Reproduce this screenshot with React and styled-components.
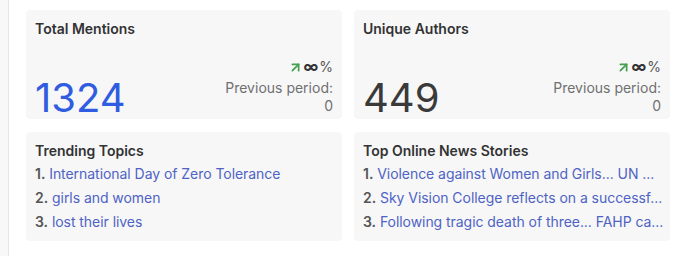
import React from 'react';
import styled, { createGlobalStyle } from 'styled-components';
import { ArrowUpRight } from 'lucide-react';

const GlobalStyle = createGlobalStyle`
  html, body {
    margin: 0;
    padding: 0;
    background: #ffffff;
    font-family: Inter, "Noto Sans", sans-serif;
  }
`;

const stats = [
  { title: 'Total Mentions', value: '1324', highlight: true, previous: '0' },
  { title: 'Unique Authors', value: '449', highlight: false, previous: '0' },
];

const lists = [
  {
    title: 'Trending Topics',
    items: ['International Day of Zero Tolerance', 'girls and women', 'lost their lives'],
  },
  {
    title: 'Top Online News Stories',
    items: [
      'Violence against Women and Girls... UN ...',
      'Sky Vision College reflects on a successf...',
      'Following tragic death of three... FAHP ca...',
    ],
  },
];

const App = () => (
  <Page>
    <GlobalStyle />
    <SideStrip />
    <Grid>
      {stats.map((s) => (
        <Card key={s.title}>
          <CardTitle>{s.title}</CardTitle>
          <StatBody>
            <BigNumber $highlight={s.highlight}>{s.value}</BigNumber>
            <Change>
              <Trend>
                <ArrowUpRight size={15} strokeWidth={2.8} color="#46a050" />
                <Infinity>∞</Infinity>
                <Percent>%</Percent>
              </Trend>
              <Muted>Previous period:</Muted>
              <Muted>{s.previous}</Muted>
            </Change>
          </StatBody>
        </Card>
      ))}
      {lists.map((l) => (
        <Card key={l.title}>
          <CardTitle>{l.title}</CardTitle>
          <List>
            {l.items.map((item, i) => (
              <ListItem key={item}>
                <Rank>{i + 1}.</Rank> <ItemLink>{item}</ItemLink>
              </ListItem>
            ))}
          </List>
        </Card>
      ))}
    </Grid>
  </Page>
);

const Page = styled.div`
  display: flex;
  width: 691px;
  height: 256px;
  background: #ffffff;
`;

const SideStrip = styled.div`
  width: 8px;
  flex-shrink: 0;
  background: #f8f8f8;
  border-right: 1px solid #e6e6e6;
`;

const Grid = styled.div`
  display: grid;
  grid-template-columns: 316px 316px;
  grid-template-rows: 109px 109px;
  column-gap: 12px;
  row-gap: 13px;
  padding: 10px 0 0 17px;
`;

const Card = styled.div`
  display: flex;
  flex-direction: column;
  background: #f7f7f8;
  border-radius: 4px;
  padding: 9px 9px 0 9px;
`;

const CardTitle = styled.div`
  font-size: 14px;
  font-weight: 600;
  color: #333333;
  line-height: 20px;
`;

const StatBody = styled.div`
  flex: 1;
  display: flex;
  justify-content: space-between;
  align-items: flex-end;
`;

const BigNumber = styled.div`
  font-size: 40px;
  font-weight: 400;
  line-height: 44px;
  margin-bottom: -1px;
  color: ${({ $highlight }) => ($highlight ? '#2f5ce0' : '#3a3a3a')};
`;

const Change = styled.div`
  display: flex;
  flex-direction: column;
  align-items: flex-end;
  padding-bottom: 4px;
`;

const Trend = styled.div`
  display: flex;
  align-items: center;
  gap: 1px;
  line-height: 18px;
  margin-bottom: 3px;
`;

const Infinity = styled.span`
  font-weight: 700;
  font-size: 15px;
  color: #333333;
`;

const Percent = styled.span`
  font-size: 14px;
  color: #555555;
`;

const Muted = styled.div`
  font-size: 14px;
  color: #707070;
  line-height: 18px;
`;

const List = styled.div`
  display: flex;
  flex-direction: column;
  margin-top: 1px;
`;

const ListItem = styled.div`
  font-size: 14px;
  line-height: 24px;
  white-space: nowrap;
  letter-spacing: -0.05px;
`;

const Rank = styled.span`
  font-weight: 600;
  color: #555555;
`;

const ItemLink = styled.span`
  color: #4e63c4;
`;

export default App;
